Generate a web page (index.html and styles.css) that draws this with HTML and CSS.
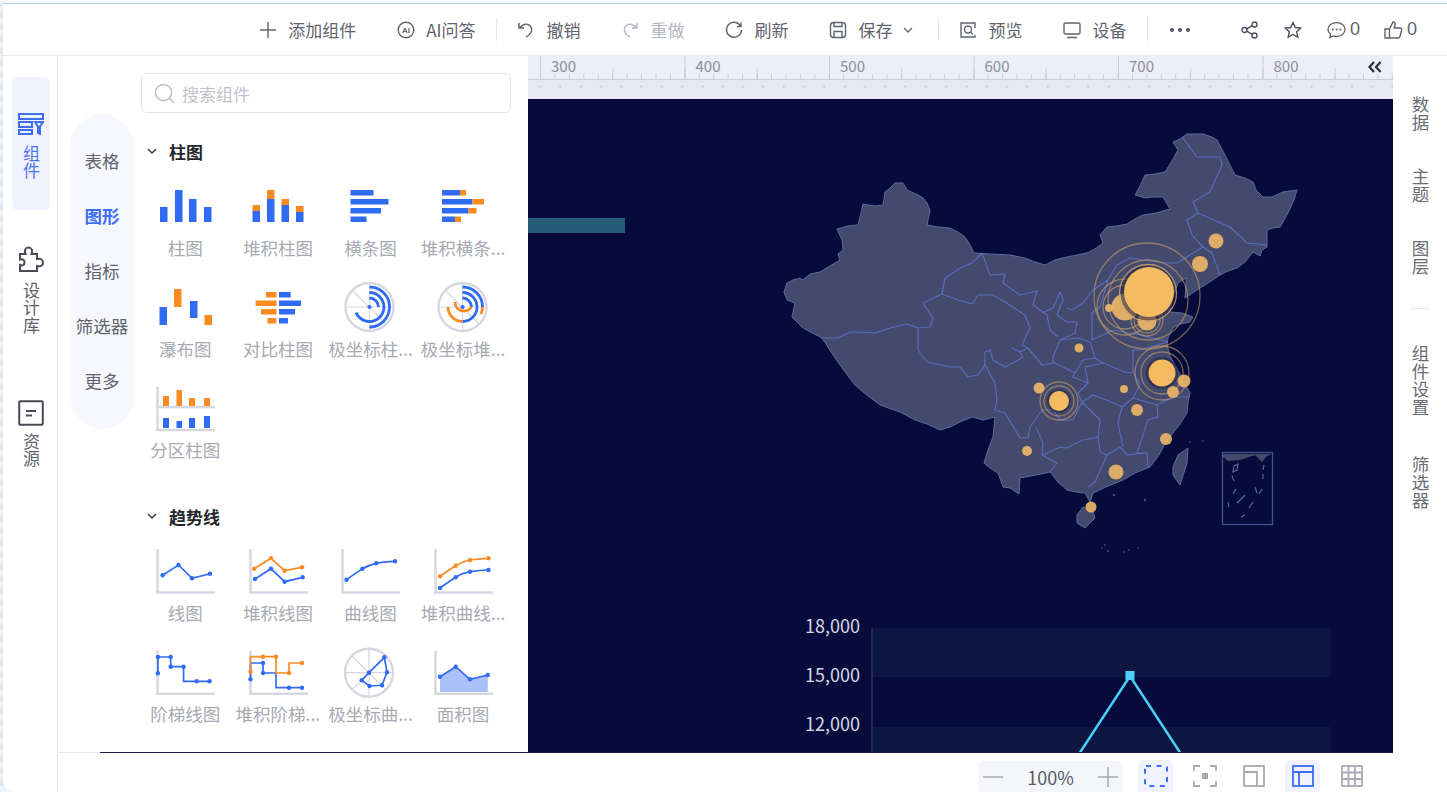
FILE: index.html
```html
<!DOCTYPE html>
<html lang="zh">
<head>
<meta charset="utf-8">
<title>组件</title>
<link rel="stylesheet" href="styles.css">
</head>
<body>
<div class="window">
  <header class="topbar">
    <div class="tool"><svg class="ico" viewBox="0 0 18 18"><path d="M9 1v16M1 9h16"/></svg><span>添加组件</span></div>
    <div class="tool"><svg class="ico" viewBox="0 0 18 18"><circle cx="9" cy="9" r="7.800"/><text x="9" y="12" class="ai-text">AI</text></svg><span>AI问答</span></div>
    <i class="vline"></i>
    <div class="tool"><svg class="ico" viewBox="0 0 18 18"><path d="M2 2v5h5M2.500 7C5 4 8 2.500 11 3.500c3.500 1.200 4.500 5 3 8-1 2-3 3.500-5 4.500"/></svg><span>撤销</span></div>
    <div class="tool off"><svg class="ico" viewBox="0 0 18 18"><path d="M16 2v5h-5M15.500 7C13 4 10 2.500 7 3.500c-3.500 1.200-4.500 5-3 8 1 2 3 3.500 5 4.500"/></svg><span>重做</span></div>
    <div class="tool"><svg class="ico" viewBox="0 0 18 18"><path d="M15.500 5A7.500 7.500 0 1 0 16.500 9M16 1.500V5.500H12"/></svg><span>刷新</span></div>
    <div class="tool"><svg class="ico" viewBox="0 0 18 18"><rect x="1.500" y="1.500" width="15" height="15" rx="3"/><path d="M5 1.500v4h8v-4M5 16.500v-6h8v6"/></svg><span>保存</span><svg class="caret" viewBox="0 0 10 6"><path d="M1 1l4 4 4-4"/></svg></div>
    <i class="vline"></i>
    <div class="tool"><svg class="ico" viewBox="0 0 18 18"><path d="M16 7V2H2v14h14v-2"/><circle cx="9" cy="8.500" r="3.500"/><path d="M11.500 11l2.500 2.500"/></svg><span>预览</span></div>
    <div class="tool"><svg class="ico" viewBox="0 0 18 18"><rect x="1" y="2" width="16" height="11" rx="1.500"/><path d="M4 16.500h10"/></svg><span>设备</span></div>
    <i class="vline"></i>
    <div class="more"><i></i><i></i><i></i></div>
    <div class="social">
      <svg class="ico share" viewBox="0 0 18 18"><circle cx="13.500" cy="3.500" r="2.500"/><circle cx="3.500" cy="9" r="2.500"/><circle cx="13.500" cy="14.500" r="2.500"/><path d="M5.700 7.800l5.600-3.100M5.700 10.200l5.600 3.100"/></svg>
      <svg class="ico star" viewBox="0 0 18 18"><path d="M9 1.500l2.300 5 5.400.6-4 3.700 1.100 5.400L9 13.500l-4.800 2.700 1.100-5.400-4-3.700 5.400-.6z"/></svg>
      <div class="count"><svg class="ico" viewBox="0 0 20 18"><path d="M10 1.200c5 0 9 3.200 9 7.300s-4 7.300-9 7.300c-1.200 0-2.300-.2-3.300-.5L3 17l.7-3.700C2 12 1 10.400 1 8.500 1 4.400 5 1.200 10 1.200z"/><path class="dots" d="M6 8.500h.2M10 8.500h.2M14 8.500h.2"/></svg><span>0</span></div>
      <div class="count"><svg class="ico" viewBox="0 0 19 18"><path d="M5.500 8v9M1 8h4.500v9H1zM5.500 8l3.500-7c2 0 2.500 1.500 2 3l-.7 3h5.700c1.200 0 2 1 1.700 2l-1.700 6.500c-.2.900-1 1.500-2 1.500H5.500"/></svg><span>0</span></div>
    </div>
  </header>

  <div class="body">
    <nav class="leftrail">
      <div class="rail-item active">
        <svg class="rail-ico" viewBox="0 0 26 22"><path d="M1 1h24v5H1zM1 9h13v5H1zM1 17h13v4H1z"/><path d="M17 9h8l-3 4.500V21l-2-1v-6.500z"/></svg>
        <span class="vtext">组件</span>
      </div>
      <div class="rail-item">
        <svg class="rail-ico puzzle" viewBox="0 0 26 26"><path d="M2 8h5.500C6 4.500 7.500 1.500 10.500 1.500S15 4.500 13.500 8H19v5c3.500-1 6 .5 6 3.500s-2.500 4.500-6 3.500v5H2v-6c2.500 1 4.500 0 4.500-2.500S4.500 12.500 2 13.500z"/></svg>
        <span class="vtext">设计库</span>
      </div>
      <div class="rail-item compact">
        <svg class="rail-ico file" viewBox="0 0 26 26"><rect x="1.200" y="1.200" width="23.600" height="23.600" rx="1"/><path d="M8 11h10M8 15.500h6"/></svg>
        <span class="vtext">资源</span>
      </div>
    </nav>

    <div class="center">
      <div class="workrow">
        <aside class="panel">
          <div class="pill">
            <span>表格</span>
            <span class="sel">图形</span>
            <span>指标</span>
            <span>筛选器</span>
            <span>更多</span>
          </div>
          <div class="lib">
            <div class="search">
              <svg viewBox="0 0 22 22"><circle cx="10" cy="10" r="8.500"/><path d="M16 16l5 5"/></svg>
              <span>搜索组件</span>
            </div>

            <div class="sec-head"><svg viewBox="0 0 10 6"><path d="M1 1l4 4 4-4"/></svg><b>柱图</b></div>
            <div class="grid">
              <div class="item"><svg viewBox="0 0 64 56"><g class="b"><rect x="7" y="27" width="7.500" height="15"/><rect x="22" y="10" width="7.500" height="32"/><rect x="36" y="19" width="7.500" height="23"/><rect x="51" y="27" width="7.500" height="15"/></g></svg><span>柱图</span></div>
              <div class="item"><svg viewBox="0 0 64 56"><g class="b"><rect x="6.500" y="31" width="7.500" height="11"/><rect x="21" y="19" width="7.500" height="23"/><rect x="35.500" y="25" width="7.500" height="17"/><rect x="50" y="32" width="7.500" height="10"/></g><g class="o"><rect x="6.500" y="25" width="7.500" height="6"/><rect x="21" y="10" width="7.500" height="9"/><rect x="35.500" y="19" width="7.500" height="6"/><rect x="50" y="26" width="7.500" height="6"/></g></svg><span>堆积柱图</span></div>
              <div class="item"><svg viewBox="0 0 64 56"><g class="b"><rect x="12.500" y="10" width="23" height="5.500"/><rect x="12.500" y="19" width="38" height="5.500"/><rect x="12.500" y="28" width="30.500" height="5.500"/><rect x="12.500" y="36.500" width="16" height="5.500"/></g></svg><span>横条图</span></div>
              <div class="item"><svg viewBox="0 0 64 56"><g class="b"><rect x="11" y="10" width="18" height="5.500"/><rect x="11" y="19" width="30.500" height="5.500"/><rect x="11" y="28" width="26.500" height="5.500"/><rect x="11" y="36.500" width="13" height="5.500"/></g><g class="o"><rect x="29" y="10" width="6" height="5.500"/><rect x="41.500" y="19" width="11.500" height="5.500"/><rect x="37.500" y="28" width="8" height="5.500"/><rect x="24" y="36.500" width="6" height="5.500"/></g></svg><span>堆积横条...</span></div>

              <div class="item"><svg viewBox="0 0 64 56"><g class="b"><rect x="6.500" y="26" width="7.500" height="18"/><rect x="37" y="20" width="7.500" height="17"/></g><g class="o"><rect x="21" y="8" width="7.500" height="18"/><rect x="51.500" y="34" width="7.500" height="10"/></g></svg><span>瀑布图</span></div>
              <div class="item"><svg viewBox="0 0 64 56"><g class="o"><rect x="20" y="11" width="10.500" height="5.500"/><rect x="9.600" y="19.500" width="21" height="5.500"/><rect x="15" y="28" width="15.500" height="5.500"/><rect x="21.400" y="37" width="9" height="5.500"/></g><g class="b"><rect x="33" y="11" width="11.700" height="5.500"/><rect x="33" y="19.500" width="22" height="5.500"/><rect x="33" y="28" width="16" height="5.500"/><rect x="33" y="37" width="9" height="5.500"/></g></svg><span>对比柱图</span></div>
              <div class="item"><svg viewBox="0 0 64 56"><g class="axis thin"><path d="M7.500 26h48M31.500 2v48M14 9l35 35"/></g><circle class="ring" cx="31.500" cy="26" r="24"/><g class="arc-b"><path d="M31.500 6A20 20 0 0 1 31.500 46"/><path d="M31.500 11.500A14.500 14.500 0 1 1 18 31.500"/><path d="M31.500 17A9 9 0 0 1 40.500 26"/></g><circle class="dot-b" cx="31.500" cy="26" r="2"/></svg><span>极坐标柱...</span></div>
              <div class="item"><svg viewBox="0 0 64 56"><g class="axis thin"><path d="M7.500 26h48M31.500 2v48M14 9l35 35"/></g><circle class="ring" cx="31.500" cy="26" r="24"/><g class="arc-b"><path d="M31.500 6A20 20 0 0 1 51.500 26"/><path d="M31.500 11.500A14.500 14.500 0 0 1 31.500 40.500"/><path d="M31.500 17A9 9 0 0 1 40.500 26"/></g><g class="arc-o"><path d="M51.500 26A20 20 0 0 1 50 33"/><path d="M31.500 40.500A14.500 14.500 0 0 1 17 26"/><path d="M40.500 26A9 9 0 0 1 24 21"/></g><circle class="dot-b" cx="31.500" cy="26" r="2"/></svg><span>极坐标堆...</span></div>

              <div class="item"><svg viewBox="0 0 64 56"><path class="axis" d="M4.500 5v44M3 25h59M3 48h59"/><g class="o"><rect x="10" y="14" width="6" height="10"/><rect x="23.500" y="8" width="5.500" height="16"/><rect x="36" y="16" width="6" height="8"/><rect x="51" y="16" width="6" height="8"/></g><g class="b"><rect x="10" y="36" width="6" height="10"/><rect x="23.500" y="39" width="5.500" height="7"/><rect x="36" y="36" width="6" height="10"/><rect x="51" y="34" width="6" height="12"/></g></svg><span>分区柱图</span></div>
            </div>

            <div class="sec-head second"><svg viewBox="0 0 10 6"><path d="M1 1l4 4 4-4"/></svg><b>趋势线</b></div>
            <div class="grid">
              <div class="item"><svg viewBox="0 0 64 56"><path class="axis" d="M4.500 4v44M3 47.500h59"/><polyline class="lb" points="9.600,30.300 25.500,20 39,33.300 57,28.700"/><g class="dot-b"><circle cx="9.600" cy="30.300" r="2.200"/><circle cx="25.500" cy="20" r="2.200"/><circle cx="39" cy="33.300" r="2.200"/><circle cx="57" cy="28.700" r="2.200"/></g></svg><span>线图</span></div>
              <div class="item"><svg viewBox="0 0 64 56"><path class="axis" d="M4.500 4v44M3 47.500h59"/><polyline class="lo" points="8.200,23.700 25,13.300 38.600,25.700 56,22.300"/><polyline class="lb" points="9,34 25,23.700 38.600,36.700 56.600,32.300"/><g class="dot-o"><circle cx="8.200" cy="23.700" r="2.200"/><circle cx="25" cy="13.300" r="2.200"/><circle cx="38.600" cy="25.700" r="2.200"/><circle cx="56" cy="22.300" r="2.200"/></g><g class="dot-b"><circle cx="9" cy="34" r="2.200"/><circle cx="25" cy="23.700" r="2.200"/><circle cx="38.600" cy="36.700" r="2.200"/><circle cx="56.600" cy="32.300" r="2.200"/></g></svg><span>堆积线图</span></div>
              <div class="item"><svg viewBox="0 0 64 56"><path class="axis" d="M4.500 4v44M3 47.500h59"/><path class="lb" d="M8.500 34.700C14 31 19 27 24.400 23.700S33 19.500 38.300 18.300 50 16.600 57 16.300"/><g class="dot-b"><circle cx="8.500" cy="34.700" r="2.200"/><circle cx="24.400" cy="23.700" r="2.200"/><circle cx="38.300" cy="18.300" r="2.200"/><circle cx="57" cy="16.300" r="2.200"/></g></svg><span>曲线图</span></div>
              <div class="item"><svg viewBox="0 0 64 56"><path class="axis" d="M4.500 4v44M3 47.500h59"/><path class="lo" d="M9 31.300C14 28 19 24 24.700 20.700S33 16 39 15 50 13.600 57.500 13.300"/><path class="lb" d="M9 43C14 39.500 19 36 24.700 32.300S33 27.800 39 26.700 50 25 57.500 25"/><g class="dot-o"><circle cx="9" cy="31.300" r="2.200"/><circle cx="24.700" cy="20.700" r="2.200"/><circle cx="39" cy="15" r="2.200"/><circle cx="57.500" cy="13.300" r="2.200"/></g><g class="dot-b"><circle cx="9" cy="43" r="2.200"/><circle cx="24.700" cy="32.300" r="2.200"/><circle cx="39" cy="26.700" r="2.200"/><circle cx="57.500" cy="25" r="2.200"/></g></svg><span>堆积曲线...</span></div>

              <div class="item"><svg viewBox="0 0 64 56"><path class="axis" d="M4.500 4.700v44M3 47.700h59"/><polyline class="lb" points="4.900,27.300 4.900,11 17.700,11 17.700,20.700 30.600,20.700 30.600,35.300 56.600,35.300"/><g class="dot-b"><circle cx="4.900" cy="27.300" r="2.200"/><circle cx="4.900" cy="11" r="2.200"/><circle cx="17.700" cy="11" r="2.200"/><circle cx="17.700" cy="20.700" r="2.200"/><circle cx="30.600" cy="20.700" r="2.200"/><circle cx="43.700" cy="35.300" r="2.200"/><circle cx="56.600" cy="35.300" r="2.200"/></g></svg><span>阶梯线图</span></div>
              <div class="item"><svg viewBox="0 0 64 56"><path class="axis" d="M4.500 4.700v44M3 47.700h59"/><polyline class="lb" points="4.500,33.300 4.500,17 17,17 17,27 30,27 30,41.700 56,41.700"/><polyline class="lo" points="4.500,25.700 4.500,10.700 30,10.700 30,27 43,27 43,17 56,17"/><g class="dot-b"><circle cx="4.500" cy="33.300" r="2.200"/><circle cx="17" cy="17" r="2.200"/><circle cx="17" cy="27" r="2.200"/><circle cx="43" cy="41.700" r="2.200"/><circle cx="56" cy="41.700" r="2.200"/></g><g class="dot-o"><circle cx="4.500" cy="25.700" r="2.200"/><circle cx="17" cy="10.700" r="2.200"/><circle cx="30" cy="10.700" r="2.200"/><circle cx="43" cy="27" r="2.200"/><circle cx="56" cy="17" r="2.200"/></g></svg><span>堆积阶梯...</span></div>
              <div class="item"><svg viewBox="0 0 64 56"><g class="axis thin"><path d="M7 26.700h48M31 3v48M14 10l34 34M48 10L14 44"/></g><circle class="ring" cx="31" cy="26.700" r="24"/><polygon class="lb" points="46.400,11.300 49,26.300 44,39.300 31.500,40 23.700,34.300 31,26.700"/><g class="dot-b"><circle cx="46.400" cy="11.300" r="2.200"/><circle cx="49" cy="26.300" r="2.200"/><circle cx="44" cy="39.300" r="2.200"/><circle cx="31.500" cy="40" r="2.200"/><circle cx="23.700" cy="34.300" r="2.200"/><circle cx="31" cy="26.700" r="2.200"/></g></svg><span>极坐标曲...</span></div>
              <div class="item"><svg viewBox="0 0 64 56"><path class="axis" d="M4.500 4.700v44M3 47.700h59"/><polygon class="area" points="9,30.700 24.700,20.700 39,33.300 56.800,29 56.800,46 9,46"/><polyline class="lb" points="9,30.700 24.700,20.700 39,33.300 56.800,29"/><g class="dot-b"><circle cx="9" cy="30.700" r="2.200"/><circle cx="24.700" cy="20.700" r="2.200"/><circle cx="39" cy="33.300" r="2.200"/><circle cx="56.800" cy="29" r="2.200"/></g></svg><span>面积图</span></div>
            </div>
          </div>
        </aside>

        <main class="stage">
          <div class="ruler">
            <span>300</span><span>400</span><span>500</span><span>600</span><span>700</span><span>800</span>
            <svg class="collapse" viewBox="0 0 14 12"><path d="M6 1L1.500 6 6 11M12.500 1L8 6l4.500 5"/></svg>
          </div>
          <div class="dotstrip"></div>
          <svg class="canvas" viewBox="528 99 865 653" preserveAspectRatio="none">
            <rect class="tealbar" x="528" y="218" width="97" height="15"/>

            <path class="land" d="M784 292 787 283 793 280 800 278 803 280 810 274 820 272 830 266 840 260 838 254 843 250 842 240 837 229 848 226 858 225 861 213 863 204 875 206 883 205 885 192 889 189 895 183 903 183 907 190 918 195 923 198 927 203 930 210 927 225 938 227 950 228 958 232 965 237 970 245 974 253 990 254 1010 255 1025 258 1035 262 1045 265 1055 260 1067 257 1087 253 1095 249 1103 243 1100 235 1107 227 1117 226 1127 224 1135 219 1143 215 1156 213 1170 209 1163 197 1152 197 1146 198 1135 195 1140 186 1145 175 1155 174 1165 172 1172 161 1178 150 1173 142 1180 139 1187 134 1195 134 1203 134 1212 137 1217 140 1225 155 1230 165 1235 175 1245 178 1253 182 1256 190 1263 197 1272 197 1283 192 1297 190 1294 200 1288 213 1280 227 1273 228 1267 230 1267 247 1262 250 1260 256 1253 252 1245 262 1237 268 1228 271 1220 275 1208 283 1197 290 1185 298 1186 285 1186 278 1178 283 1172 300 1170 312 1182 313 1193 317 1190 322 1180 324 1173 328 1168 338 1167 345 1170 356 1175 365 1182 378 1190 393 1188 402 1187 413 1180 424 1173 433 1166 442 1159 455 1150 467 1135 473 1123 480 1108 486 1093 493 1090 502 1085 493 1076 492 1067 490 1058 482 1050 472 1036 475 1020 478 1019 494 1010 488 1003 487 998 473 990 468 984 463 988 450 993 437 995 417 983 420 972 417 960 422 950 427 940 430 927 424 915 420 900 412 880 405 868 396 855 385 845 372 835 358 822 338 803 328 792 317 795 303 787 300Z"/>
            <path class="land" d="M1077 515 1083 507 1093 512 1095 518 1085 528 1077 523Z"/>
            <path class="land" d="M1178 455 1188 448 1187 463 1180 485 1173 475 1173 467Z"/>

            <path class="borders" d="M821 338 838 338 850 332 858 332 875 333 890 328 907 324 918 328 930 327 933 318 923 303 942 294 945 278 962 267 972 263 982 253M942 294 958 300 972 304 978 295 993 295 1005 302 1025 315 1030 328 1022 345 1028 348 1042 365 1053 363 1053 357 1060 340 1078 338 1090 342M918 328 918 350 927 362 950 367 960 367 968 377 978 375 985 365 985 352 990 350 993 360 1005 367 1015 362 1023 357 1020 352 1012 348 1020 352 1028 348M985 365 995 383 997 400 995 410M982 253 990 275 1005 274 1003 283 1020 295 1037 291 1033 305 1047 315 1050 330 1058 337M1042 313 1053 308 1060 292 1063 300 1057 315 1067 322 1077 322 1075 333 1060 340M1067 308 1072 310 1083 303 1093 290 1108 280M1183 138 1197 157 1220 157 1222 165 1210 192 1193 202 1198 213 1230 227 1247 243 1267 245M1198 213 1187 220 1192 235 1203 247 1212 253 1220 275M1203 247 1177 263 1165 263 1130 258 1117 265 1108 280 1100 307 1092 313 1092 340 1113 330 1140 335 1168 342M1090 342 1095 358 1083 360 1075 373 1053 362M995 410 1005 413 1020 438 1028 438 1030 427 1042 410 1053 410 1060 420 1073 420 1082 402 1078 393 1088 383 1073 377 1075 373M1036 427 1043 443 1042 455 1057 463 1050 472M1043 455 1060 447 1067 448 1083 440 1098 437 1100 452 1107 455M1088 487 1095 482 1107 455 1120 447 1127 455 1147 453 1148 467M1082 402 1093 395 1107 400 1122 407 1118 423 1123 447M1147 453 1137 453 1148 420 1158 417 1157 405 1173 397 1190 397M1122 407 1133 398 1157 405M1088 383 1085 367 1103 363 1127 373 1133 372 1133 350 1140 350 1168 342M1095 358 1103 363M1133 372 1140 385 1133 398M1098 437 1100 420 1082 402"/>

            <g class="inset">
              <rect x="1222.500" y="452.500" width="50" height="72"/>
              <path class="insetland" d="M1223 454H1272L1267 456 1262 462 1255 455 1240 460 1228 461 1223 457Z"/>
              <path class="isle" d="M1234 466l4-2-1 6-4 2zM1232 476l2 5M1264 465l-1 5M1263 474v5M1262 489l-3 5M1236 489l-3 5M1228 502l1 5M1253 502l-4 6M1245 515l-4 2M1255 487l2 6M1245 495l-8 8"/>
            </g>
            <g class="specks"><circle cx="1105" cy="545" r=".8"/><circle cx="1102" cy="548" r=".8"/><circle cx="1108" cy="551" r=".8"/><circle cx="1124" cy="552" r=".8"/><circle cx="1129" cy="550" r=".8"/><circle cx="1138" cy="548" r=".8"/><circle cx="1114" cy="495" r="1"/><circle cx="1145" cy="500" r="1"/><circle cx="1190" cy="442" r=".8"/><circle cx="1203" cy="441" r=".8"/></g>

            <g class="bubble-rings">
              <circle cx="1147" cy="296" r="53"/>
              <circle cx="1148" cy="300" r="40"/>
              <circle cx="1125" cy="307" r="28"/>
              <circle cx="1125" cy="307" r="22"/>
              <circle cx="1147" cy="320" r="16"/>
              <circle cx="1147" cy="320" r="13"/>
              <circle cx="1162" cy="373" r="21"/>
              <circle cx="1162" cy="373" r="27"/>
              <circle cx="1059" cy="401" r="15"/>
              <circle cx="1059" cy="401" r="19"/>
            </g>
            <g class="bubble-soft">
              <circle cx="1216" cy="241" r="7.500"/><circle cx="1200" cy="264" r="8"/><circle cx="1109" cy="308" r="4"/>
              <circle cx="1039" cy="388" r="5.500"/><circle cx="1079" cy="348" r="4.500"/><circle cx="1124" cy="389" r="4"/>
              <circle cx="1137" cy="410" r="6"/><circle cx="1184" cy="381" r="6.500"/><circle cx="1173" cy="392" r="6"/>
              <circle cx="1166" cy="439" r="6"/><circle cx="1116" cy="472" r="7.500"/><circle cx="1091" cy="507" r="5.500"/>
              <circle cx="1027" cy="451" r="5"/>
              <circle cx="1147" cy="321" r="9.500"/>
              <circle cx="1125" cy="307" r="13.500"/>
            </g>
            <g class="halo">
              <circle cx="1148" cy="293" r="27.500"/>
              <circle cx="1162" cy="373" r="16"/>
              <circle cx="1059" cy="401" r="12"/>
            </g>
            <circle class="topring" cx="1148" cy="293" r="28.500"/>
            <g class="bubble">
              <circle cx="1149" cy="292" r="25"/>
              <circle cx="1162" cy="373" r="13.500"/>
              <circle cx="1059" cy="401" r="10"/>
            </g>

            <rect class="band" x="872" y="628" width="459" height="49"/>
            <rect class="band" x="872" y="727" width="459" height="30"/>
            <path class="yaxis" d="M872 628V752"/>
            <text class="ylabel" x="860" y="633">18,000</text>
            <text class="ylabel" x="860" y="682">15,000</text>
            <text class="ylabel" x="860" y="731">12,000</text>
            <path class="series" d="M1079 754L1130 676 1181 754"/>
            <rect class="marker" x="1125.500" y="671" width="9" height="9"/>
          </svg>
        </main>
      </div>

      <footer class="bottombar">
        <div class="zoombox"><svg viewBox="0 0 20 20"><path d="M0 10h20"/></svg><span>100%</span><svg viewBox="0 0 20 20"><path d="M0 10h20M10 0v20"/></svg></div>
        <div class="vb on"><svg viewBox="0 0 24 22"><rect class="dash" x="1" y="1" width="22" height="20" rx="1"/></svg></div>
        <div class="vb"><svg viewBox="0 0 24 22"><path d="M1 6V1h6M17 1h6v5M23 16v5h-6M7 21H1v-5"/><rect class="fillg" x="9" y="8" width="6" height="6"/></svg></div>
        <div class="vb"><svg viewBox="0 0 24 22"><rect x="2" y="1" width="20" height="20"/><path d="M2 7h13v14"/></svg></div>
        <div class="vb on blue"><svg viewBox="0 0 24 22"><rect x="2" y="1" width="20" height="20"/><path d="M2 7h20M8 7v14"/></svg></div>
        <div class="vb"><svg viewBox="0 0 24 22"><rect x="2" y="1" width="20" height="20"/><path d="M2 7.500h20M2 14h20M8.500 1v20M15 1v20"/></svg></div>
      </footer>
    </div>

    <nav class="rightrail">
      <span class="vtext side">数据</span>
      <span class="vtext side">主题</span>
      <span class="vtext side">图层</span>
      <i class="hline"></i>
      <span class="vtext side">组件设置</span>
      <span class="vtext side last">筛选器</span>
    </nav>
  </div>
</div>
</body>
</html>
```
FILE: styles.css
```css
* { box-sizing: border-box; }
html, body { margin: 0; height: 100%; }
body {
  width: 1447px;
  height: 792px;
  overflow: hidden;
  font-family: "Noto Sans CJK SC", "Noto Sans", sans-serif;
  font-size: 17px;
  color: #5f636e;
  background:
    linear-gradient(#f6f9fb, #f6f9fb) 0 0 / 100% 3px no-repeat,
    repeating-linear-gradient(to bottom, #dde8f1 0 6px, #edf3f8 6px 12px);
}
.window {
  margin: 3px 0 0 3px;
  height: 789px;
  background: #fff;
  border-top: 1px solid #b9d0df;
  border-bottom-left-radius: 12px;
  overflow: hidden;
  display: flex;
  flex-direction: column;
}
.vtext {
  writing-mode: vertical-rl;
  text-orientation: upright;
  line-height: 20px;
  letter-spacing: .5px;
}

/* top bar */
.topbar {
  height: 52px;
  flex: none;
  display: flex;
  align-items: center;
  justify-content: flex-end;
  border-bottom: 1px solid #ececf0;
  padding-right: 30px;
}
.tool { display: flex; align-items: center; gap: 11px; padding: 0 20.500px; white-space: nowrap; }
.tool.off { color: #b4b7be; }
.ico { width: 18px; height: 18px; fill: none; stroke: currentColor; stroke-width: 1.400; flex: none; }
.ai-text { font-size: 8px; font-weight: 700; text-anchor: middle; fill: currentColor; stroke: none; font-family: "Liberation Sans", sans-serif; }
.caret { width: 10px; height: 6px; fill: none; stroke: currentColor; stroke-width: 1.300; margin-right: 4px; }
.vline { width: 1px; height: 23px; background: #e4e5e9; flex: none; }
.more { display: flex; gap: 4px; margin: 0 51px 0 22px; }
.more i { width: 4px; height: 4px; border-radius: 50%; background: #4c5162; }
.social { display: flex; align-items: center; gap: 25px; }
.share, .star { color: #4c5162; }
.count { display: flex; align-items: center; gap: 4px; font-size: 18px; font-family: "Liberation Sans", sans-serif; }
.count + .count { margin-left: -1px; }
.count .ico { width: 19px; height: 18px; }
.dots { stroke-width: 2; stroke-linecap: round; }

/* layout */
.body { flex: 1; display: flex; min-height: 0; }
.leftrail {
  width: 55px;
  flex: none;
  padding-top: 21px;
  border-right: 1px solid #e8e8ec;
  display: flex;
  flex-direction: column;
}
.rail-item {
  margin: 0 7px 0 9px;
  padding: 36px 0 29.500px;
  display: flex;
  flex-direction: column;
  align-items: center;
  border-radius: 6px;
}
.rail-item.active { background: #f0f3fd; color: #4f72ee; }
.rail-ico { width: 26px; height: 22px; margin-bottom: 10px; fill: none; stroke: currentColor; stroke-width: 2; }
.rail-item.active .rail-ico { color: #3d6df0; }
.puzzle, .file { height: 26px; color: #474b58; }
.compact .file { margin-bottom: 7px; }

.center { flex: 1; min-width: 0; display: flex; flex-direction: column; }
.workrow { flex: 1; min-height: 0; display: flex; }

/* component panel */
.panel { width: 470px; flex: none; display: flex; padding-left: 12px; background: #fff; }
.pill {
  width: 64px;
  height: 315px;
  margin-top: 58px;
  flex: none;
  border-radius: 32px;
  background: #f7f8fd;
  display: flex;
  flex-direction: column;
  align-items: center;
  padding-top: 35px;
  gap: 31px;
  line-height: 24px;
  font-size: 17.500px;
  white-space: nowrap;
}
.pill .sel { color: #3d6df0; font-weight: 700; }
.lib { width: 389px; margin-left: 5px; padding-top: 17px; }
.search {
  width: 370px;
  height: 40px;
  margin-left: 2px;
  border: 1px solid #e2e4ea;
  border-radius: 6px;
  display: flex;
  align-items: center;
  gap: 7px;
  padding-left: 12px;
  color: #c0c3ca;
}
.search svg { width: 21px; height: 21px; fill: none; stroke: #bcbfc6; stroke-width: 1.600; }
.sec-head { display: flex; align-items: center; gap: 12px; height: 24px; margin: 26px 0 17px 8px; color: #24262c; }
.sec-head.second { margin-top: 42px; }
.sec-head svg { width: 10px; height: 6px; fill: none; stroke: #33363d; stroke-width: 1.400; }
.sec-head b { font-weight: 700; }
.grid { display: grid; grid-template-columns: repeat(4, 92.600px); row-gap: 21px; }
.item { height: 80px; display: flex; flex-direction: column; align-items: center; color: #a7aab2; white-space: nowrap; font-size: 17.500px; }
.item svg { width: 64px; height: 56px; flex: none; }
.item span { line-height: 24px; }
.b rect { fill: #2f6bf3; }
.o rect { fill: #fa8b22; }
.axis { fill: none; stroke: #d6d7e3; stroke-width: 2.500; }
.axis.thin { stroke-width: 1.200; }
.ring { fill: none; stroke: #d6d7e3; stroke-width: 2.400; }
.arc-b, .arc-o { fill: none; stroke-width: 2.800; }
.arc-b { stroke: #2f6bf3; }
.arc-o { stroke: #fa8b22; }
.lb, .lo { fill: none; stroke-width: 1.700; }
.lb { stroke: #2f6bf3; }
.lo { stroke: #fa8b22; }
.dot-b { fill: #2f6bf3; }
.dot-o { fill: #fa8b22; }
.area { fill: #a9c1f7; }

/* stage */
.stage { flex: 1; min-width: 0; display: flex; flex-direction: column; overflow: hidden; }
.ruler {
  height: 24px;
  flex: none;
  position: relative;
  display: flex;
  padding-left: 12px;
  background-color: #eceef8;
  background-image:
    linear-gradient(to right, #c9ccd8 1px, transparent 1px),
    linear-gradient(to right, #c9ccd8 1px, transparent 1px),
    linear-gradient(to right, #c9ccd8 1px, transparent 1px),
    linear-gradient(#c9ccd8, #c9ccd8);
  background-size: 144.500px 23px, 72.250px 11px, 14.450px 5px, 100% 1px;
  background-position: 12px 0, 12px 12px, 12px 18px, 0 23px;
  background-repeat: repeat-x, repeat-x, repeat-x, no-repeat;
  color: #8d909c;
  font-size: 15px;
  line-height: 20px;
}
.ruler span { width: 144.500px; flex: none; padding-left: 11px; }
.collapse {
  position: absolute;
  right: 11px;
  top: 5px;
  width: 14px;
  height: 12px;
  fill: none;
  stroke: #2e3138;
  stroke-width: 2.200;
}
.dotstrip {
  height: 19px;
  flex: none;
  background-color: #e8e9ee;
  background-image: radial-gradient(circle at center, #cfd1d9 1px, transparent 1.500px);
  background-size: 20.300px 19px;
  background-position: 2px -3px;
}
.canvas { flex: 1; min-height: 0; width: 100%; display: block; background: #070b3b; }
.tealbar { fill: #285b76; }
.land { fill: #444a6d; stroke: #5f6a9e; stroke-width: 1; stroke-linejoin: round; }
.borders { fill: none; stroke: #5b6bbd; stroke-width: 1.200; stroke-linejoin: round; }
.inset rect { fill: none; stroke: #47528f; stroke-width: 1.300; }
.insetland { fill: #444a6d; }
.isle { fill: none; stroke: #5b679f; stroke-width: 1.200; }
.specks { fill: #5b679f; }
.bubble-rings circle { fill: none; stroke: #cfa766; stroke-opacity: .55; stroke-width: 1.300; }
.topring { fill: none; stroke: #cfa766; stroke-opacity: .8; stroke-width: 1.300; }
.halo { fill: #242445; opacity: .55; }
.bubble-soft { fill: #e9b566; fill-opacity: .93; }
.bubble { fill: #f4bb60; }
.band { fill: #0d1641; }
.yaxis { stroke: #2d3358; stroke-width: 1.500; fill: none; }
.ylabel { fill: #d7d9e4; font-size: 18px; text-anchor: end; }
.series { fill: none; stroke: #4ad0fb; stroke-width: 2.500; }
.marker { fill: #4ad0fb; }

/* bottom */
.bottombar {
  height: 40px;
  flex: none;
  display: flex;
  justify-content: flex-end;
  align-items: flex-end;
  gap: 14px;
  padding-right: 24px;
  background: linear-gradient(to right, #e8e8ec 42px, #1b1d50 42px) 0 0 / 100% 1px no-repeat;
}
.zoombox {
  width: 145px;
  height: 31px;
  background: #f5f6fa;
  border-radius: 5px 5px 0 0;
  display: flex;
  align-items: center;
  justify-content: space-between;
  padding: 0 5px;
  margin-right: 1px;
  color: #565a66;
  font-size: 18px;
}
.zoombox svg { width: 20px; height: 20px; fill: none; stroke: #a6a9b2; stroke-width: 1.500; }
.vb { width: 35px; height: 32px; display: flex; align-items: center; justify-content: center; border-radius: 5px 5px 0 0; }
.vb svg { width: 24px; height: 22px; fill: none; stroke: #a7a9b4; stroke-width: 1.800; }
.vb.on { background: #f0f3fd; }
.vb.blue svg { stroke: #3d6df0; }
.dash { stroke: #3d6df0; stroke-dasharray: 5 5.500; stroke-width: 2; }
.fillg { fill: #a7a9b4; stroke: none; }

/* right rail */
.rightrail {
  width: 54px;
  flex: none;
  padding-top: 40px;
  display: flex;
  flex-direction: column;
  align-items: center;
  color: #6a6d76;
  font-size: 17.500px;
}
.side { margin-bottom: 36px; }
.side.last { margin-top: 3px; }
.hline { width: 20px; height: 1px; background: #e8e8ec; margin: -4px 0 36px; flex: none; }
```
